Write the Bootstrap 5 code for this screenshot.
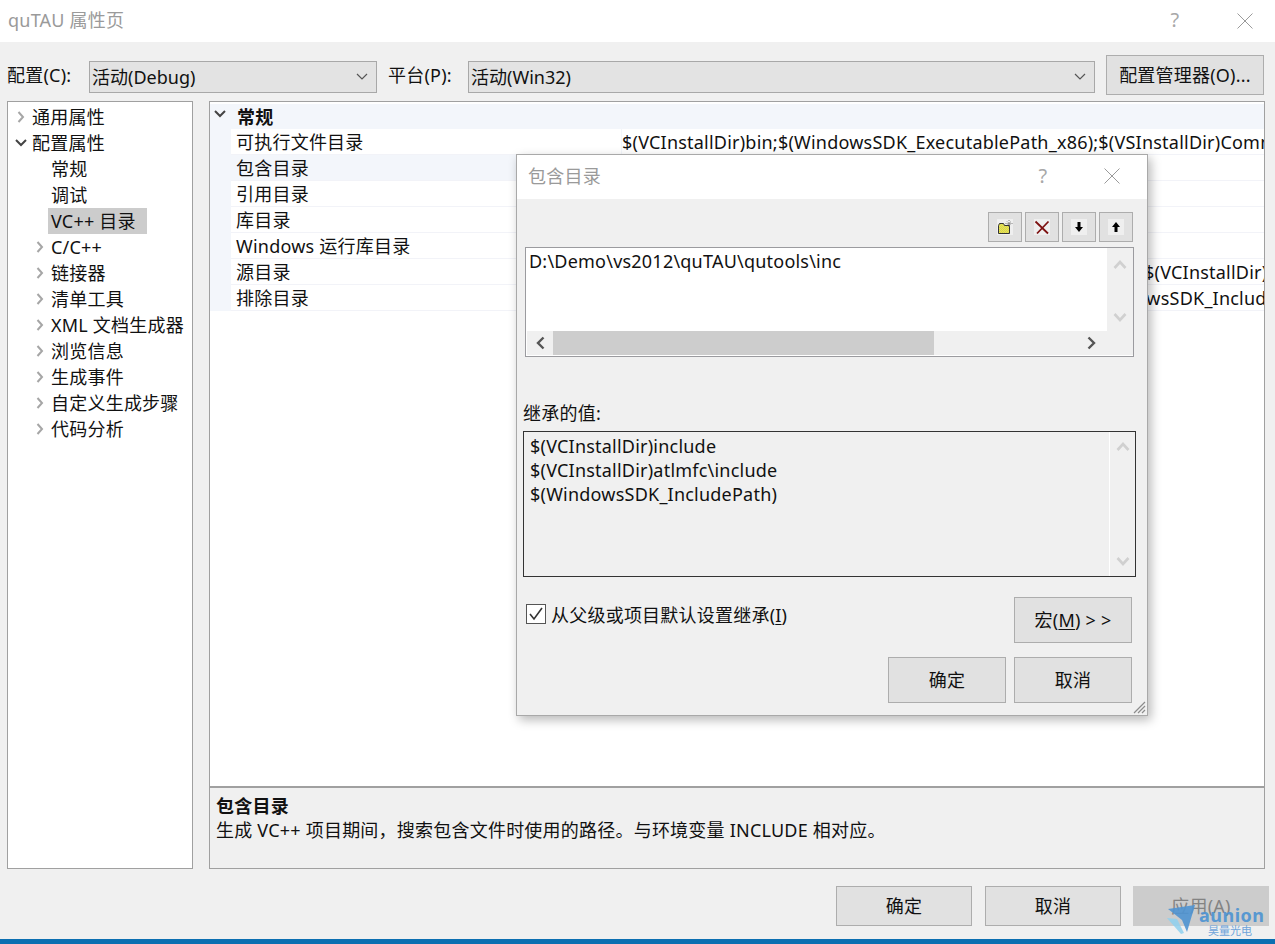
<!DOCTYPE html>
<html lang="zh-CN">
<head>
<meta charset="utf-8">
<title>quTAU 属性页</title>
<link href="https://cdn.jsdelivr.net/npm/bootstrap@5.3.0/dist/css/bootstrap.min.css" rel="stylesheet">
<style>
html,body{height:100%;}
body{background:#f0f0f0;font-family:"Noto Sans","Noto Sans CJK SC",sans-serif;font-size:18px;line-height:26px;letter-spacing:.22px;color:#111;overflow:hidden;}
.desk{position:relative;width:1275px;height:944px;overflow:hidden;}
.tbar{height:42px;background:#fff;color:#9a9a9a;padding:0 0 3px 8px;flex:none;}
.tbar-dlg{height:44px;padding:0 0 2px 11px;background:#fff;color:#9a9a9a;}
.capbtn{width:16px;height:16px;color:#9a9a9a;}
.qmark{font-size:20px;color:#a8a8a8;width:20px;text-align:center;}
.qmark-main{margin-right:37px;}
.qmark-dlg{margin-right:51px;}
.capbtn-main{margin:3px 22px 0 15px;}
.capbtn-dlg{margin-right:27px;}
.cfgrow{height:59px;padding:13px 11px 0 7px;}
.cfglbl{line-height:26px;margin-top:7px;flex:none;}
.cfglbl-a{width:82px;}
.cfglbl-b{width:80px;}
.w-sel1{width:288px;margin-right:11px;flex:none;}
.w-sel2{width:627px;margin-right:11px;flex:none;}
.form-select.wsel{height:32px;margin-top:6px;padding:0 24px 0 2px;border:1px solid #a8a8a8;border-radius:0;background-color:#e3e3e3;color:#111;font-size:18px;line-height:28px;box-shadow:none;
 background-image:url("data:image/svg+xml,%3Csvg xmlns='http://www.w3.org/2000/svg' width='12' height='8'%3E%3Cpath d='M1 1l5 5 5-5' fill='none' stroke='%23555' stroke-width='1.2'/%3E%3C/svg%3E");background-position:right 8px center;background-size:12px 8px;}
.wbtn{border:1px solid #adadad;border-radius:0;background:#e1e1e1;color:#111;font-size:18px;line-height:26px;letter-spacing:.22px;padding:0;}
.wbtn:hover{background:#e1e1e1;border-color:#adadad;color:#111;}
.wbtn-cfg{width:158px;height:40px;flex:none;}
.wbtn-act{width:136px;height:40px;}
.wbtn-first{margin-right:1px;}
.wbtn-dlg{width:118px;height:46px;flex:none;}
.wbtn-dis,.wbtn-dis:disabled{background:#ccc;border-color:#ccc;color:#838383;opacity:1;}
.panes{padding:0 10px 0 7px;height:768px;}
.treepane{width:186px;height:768px;background:#fff;border:1px solid #a0a0a0;padding-top:2px;margin-right:16px;flex:none;}
.tnode{height:26px;white-space:nowrap;position:relative;}
.tnode svg{flex:none;}
.lv0{padding-left:5px;}
.lv0 .tgl{margin-right:3px;}
.lv1{padding-left:24px;}
.lv1 .tgl{margin-right:3px;}
.lv2{padding-left:43px;}
.tgl{width:16px;display:inline-flex;align-items:center;justify-content:center;}
.tsel{background:#ccc;width:99px;margin-left:40px;padding-left:3px;}
.rightcol{width:1056px;}
.gridpane{height:686px;background:#fff;border:1px solid #a0a0a0;padding-top:2px;overflow:hidden;}
.ghead{height:25px;background:#f3f6fb;font-weight:700;padding-left:27px;position:relative;}
.gtog{position:absolute;left:4px;top:6px;}
.grow{height:26px;padding-left:21px;background:#f3f6fb;}
.gname{width:390px;padding-left:5px;background:#fff;border-bottom:1px solid #f2f3f8;flex:none;white-space:nowrap;}
.gval{flex:1;min-width:0;margin-left:1px;background:#fff;border-bottom:1px solid #f2f3f8;white-space:nowrap;overflow:hidden;}
.grow-sel .gname{background:#f3f6fb;}
.indent-a{text-indent:522px;}
.indent-b{text-indent:453px;}
.descpane{height:82px;border:1px solid #a0a0a0;padding:6px 6px;line-height:24px;}
.footrow{height:70px;padding:17px 6px 0 0;gap:12px;}
.bluebar{height:5px;background:#0b6fb1;position:relative;}
.dlgwin{position:absolute;left:516px;top:154px;width:632px;height:562px;background:#f0f0f0;border:1px solid #a9a9a9;box-shadow:3px 4px 10px rgba(0,0,0,.28);}
.tools{padding:13px 14px 0 0;gap:3px;height:48px;}
.toolbtn{width:34px;height:30px;border:1px solid #adadad;background:#e1e1e1;display:flex;align-items:center;justify-content:center;}
.listedit{margin-left:8px;width:609px;height:110px;border:1px solid #9b9b9f;background:#fff;position:relative;}
.listtxt{padding:0 0 0 3px;height:83px;background:#fff;margin-right:26px;}
.vscr{position:absolute;right:0;top:0;width:26px;background:#f0f0f0;display:flex;flex-direction:column;justify-content:space-between;align-items:center;}
.vscr1{height:83px;padding:12px 0 9px;}
.hscr{height:25px;background:#f0f0f0;position:relative;display:flex;align-items:center;justify-content:space-between;padding:0 37px 1px 9px;border-bottom:1px solid #fff;border-left:1px solid #fff;}
.hthumb{position:absolute;left:26px;top:0;width:381px;height:24px;background:#cdcdcd;}
.inhlbl{margin:43px 0 0 6px;height:26px;line-height:26px;}
.inhbox{margin:5px 0 0 6px;width:613px;height:146px;border:1px solid #333;line-height:24px;padding:2px 0 0 6px;position:relative;}
.vscr2{height:144px;border-left:1px solid #fff;padding:10px 0 10px;}
.chkrow{margin:20px 0 0 9px;height:46px;width:606px;}
.form-check-input.wchk{width:20px;height:20px;margin:7px 5px 0 0;border:1px solid #555;border-radius:0;background-color:#fff;flex:none;box-shadow:none;
 background-image:url("data:image/svg+xml,%3Csvg xmlns='http://www.w3.org/2000/svg' viewBox='0 0 20 20'%3E%3Cpath d='M4 10l4 5 8-11' fill='none' stroke='%23333' stroke-width='1.6'/%3E%3C/svg%3E");background-size:20px 20px;}
.chklbl{margin-top:5px;}
.dlgfoot{padding:14px 15px 0 0;gap:8px;}
.grip{position:absolute;right:1px;bottom:1px;}
.wmark{position:absolute;left:1167px;top:904px;width:100px;height:32px;}
.wm-en{position:absolute;left:32px;top:-1px;font-size:18px;line-height:24px;font-weight:700;color:#4f94d2;letter-spacing:.5px;opacity:.92;}
.wm-cn{position:absolute;left:41px;top:20px;font-size:11px;line-height:13px;color:#6ea4da;letter-spacing:0;}
u{text-underline-offset:2px;}
</style>
</head>
<body>
<svg width="0" height="0" class="position-absolute">
 <defs><pattern id="hatch" width="2" height="2" patternUnits="userSpaceOnUse"><rect width="2" height="2" fill="#f6f03a"/><rect width="1" height="1" fill="#c9c86a"/><rect x="1" y="1" width="1" height="1" fill="#c9c86a"/></pattern></defs>
 <symbol id="x" viewBox="0 0 16 16"><path d="M.5.5l15 15M15.500.5l-15 15" fill="none" stroke="currentColor"/></symbol>
 <symbol id="cr" viewBox="0 0 8 12"><path d="M1.500 1l4.500 5-4.500 5" fill="none" stroke="#a6a6a6" stroke-width="2"/></symbol>
 <symbol id="cd" viewBox="0 0 12 8"><path d="M1 1l5 5 5-5" fill="none" stroke="#444" stroke-width="2"/></symbol>
 <symbol id="su" viewBox="0 0 14 9"><path d="M1.500 8l5.500-6 5.500 6" fill="none" stroke="#d0d0d0" stroke-width="2.600"/></symbol>
 <symbol id="sd" viewBox="0 0 14 9"><path d="M1.500 1l5.500 6 5.500-6" fill="none" stroke="#d0d0d0" stroke-width="2.600"/></symbol>
 <symbol id="sl" viewBox="0 0 9 14"><path d="M7.500 1.500l-5.500 5.500 5.500 5.500" fill="none" stroke="#555" stroke-width="2.400"/></symbol>
 <symbol id="sr" viewBox="0 0 9 14"><path d="M1.500 1.500l5.500 5.500-5.500 5.500" fill="none" stroke="#555" stroke-width="2.400"/></symbol>
</svg>
<div class="desk d-flex flex-column">
  <div class="tbar d-flex align-items-center">
    <span class="flex-grow-1">quTAU 属性页</span>
    <span class="qmark qmark-main">?</span>
    <svg class="capbtn capbtn-main"><use href="#x"/></svg>
  </div>
  <div class="cfgrow d-flex align-items-start">
    <span class="cfglbl cfglbl-a">配置(C):</span>
    <select class="form-select wsel w-sel1"><option>活动(Debug)</option></select>
    <span class="cfglbl cfglbl-b">平台(P):</span>
    <select class="form-select wsel w-sel2"><option>活动(Win32)</option></select>
    <button class="btn wbtn wbtn-cfg" type="button">配置管理器(O)...</button>
  </div>
  <div class="panes d-flex">
    <div class="treepane">
      <div class="tnode lv0 d-flex align-items-center"><span class="tgl"><svg width="8" height="12"><use href="#cr"/></svg></span>通用属性</div>
      <div class="tnode lv0 d-flex align-items-center"><span class="tgl"><svg width="12" height="8"><use href="#cd"/></svg></span>配置属性</div>
      <div class="tnode lv2">常规</div>
      <div class="tnode lv2">调试</div>
      <div class="tnode tsel">VC++ 目录</div>
      <div class="tnode lv1 d-flex align-items-center"><span class="tgl"><svg width="8" height="12"><use href="#cr"/></svg></span>C/C++</div>
      <div class="tnode lv1 d-flex align-items-center"><span class="tgl"><svg width="8" height="12"><use href="#cr"/></svg></span>链接器</div>
      <div class="tnode lv1 d-flex align-items-center"><span class="tgl"><svg width="8" height="12"><use href="#cr"/></svg></span>清单工具</div>
      <div class="tnode lv1 d-flex align-items-center"><span class="tgl"><svg width="8" height="12"><use href="#cr"/></svg></span>XML 文档生成器</div>
      <div class="tnode lv1 d-flex align-items-center"><span class="tgl"><svg width="8" height="12"><use href="#cr"/></svg></span>浏览信息</div>
      <div class="tnode lv1 d-flex align-items-center"><span class="tgl"><svg width="8" height="12"><use href="#cr"/></svg></span>生成事件</div>
      <div class="tnode lv1 d-flex align-items-center"><span class="tgl"><svg width="8" height="12"><use href="#cr"/></svg></span>自定义生成步骤</div>
      <div class="tnode lv1 d-flex align-items-center"><span class="tgl"><svg width="8" height="12"><use href="#cr"/></svg></span>代码分析</div>
    </div>
    <div class="rightcol d-flex flex-column">
      <div class="gridpane">
        <div class="ghead"><svg class="gtog" width="12" height="8"><use href="#cd"/></svg>常规</div>
        <div class="grow d-flex"><div class="gname">可执行文件目录</div><div class="gval">$(VCInstallDir)bin;$(WindowsSDK_ExecutablePath_x86);$(VSInstallDir)Common7\Tools\bin;</div></div>
        <div class="grow grow-sel d-flex"><div class="gname">包含目录</div><div class="gval"></div></div>
        <div class="grow d-flex"><div class="gname">引用目录</div><div class="gval"></div></div>
        <div class="grow d-flex"><div class="gname">库目录</div><div class="gval"></div></div>
        <div class="grow d-flex"><div class="gname">Windows 运行库目录</div><div class="gval"></div></div>
        <div class="grow d-flex"><div class="gname">源目录</div><div class="gval indent-a">$(VCInstallDir)atlmfc\src</div></div>
        <div class="grow d-flex"><div class="gname">排除目录</div><div class="gval indent-b">$(WindowsSDK_IncludePath)</div></div>
      </div>
      <div class="descpane">
        <div class="fw-bold">包含目录</div>
        <div>生成 VC++ 项目期间，搜索包含文件时使用的路径。与环境变量 INCLUDE 相对应。</div>
      </div>
    </div>
  </div>
  <div class="footrow d-flex justify-content-end">
    <button class="btn wbtn wbtn-act wbtn-first" type="button">确定</button>
    <button class="btn wbtn wbtn-act" type="button">取消</button>
    <button class="btn wbtn wbtn-act wbtn-dis" type="button" disabled>应用(A)</button>
  </div>
  <div class="bluebar"></div>

  <div class="dlgwin">
    <div class="tbar-dlg d-flex align-items-center">
      <span class="flex-grow-1">包含目录</span>
      <span class="qmark qmark-dlg">?</span>
      <svg class="capbtn capbtn-dlg"><use href="#x"/></svg>
    </div>
    <div class="tools d-flex justify-content-end">
      <div class="toolbtn"><svg width="16" height="16" viewBox="0 0 16 16"><rect width="16" height="16" fill="#efefef"/><path d="M1.500 6.500l1-2h4l1 2h5v8h-11z" fill="url(#hatch)" stroke="#333"/><path d="M12 1v7M8.500 4.500h7M10 2.500l4 4M14 2.500l-4 4" stroke="#666" stroke-width=".8" stroke-dasharray="1 1"/></svg></div>
      <div class="toolbtn"><svg width="16" height="16" viewBox="0 0 16 16"><rect width="16" height="16" fill="#efefef"/><path d="M1.500 2.500L14 14.500M14.500 2.500L3 14.500" stroke="#7d1212" stroke-width="1.800"/></svg></div>
      <div class="toolbtn"><svg width="16" height="16" viewBox="0 0 16 16"><rect width="16" height="16" fill="#efefef"/><path d="M6.500 3h3v5H12l-4 5-4-5h2.500z" fill="#000"/></svg></div>
      <div class="toolbtn"><svg width="16" height="16" viewBox="0 0 16 16"><rect width="16" height="16" fill="#efefef"/><path d="M8 3l4 5H9.500v5h-3V8H4z" fill="#000"/></svg></div>
    </div>
    <div class="listedit">
      <div class="listtxt">D:\Demo\vs2012\quTAU\qutools\inc</div>
      <div class="vscr vscr1"><svg width="14" height="9"><use href="#su"/></svg><svg width="14" height="9"><use href="#sd"/></svg></div>
      <div class="hscr"><div class="hthumb"></div><svg width="9" height="14"><use href="#sl"/></svg><svg width="9" height="14"><use href="#sr"/></svg></div>
    </div>
    <div class="inhlbl">继承的值:</div>
    <div class="inhbox">
      <div>$(VCInstallDir)include</div>
      <div>$(VCInstallDir)atlmfc\include</div>
      <div>$(WindowsSDK_IncludePath)</div>
      <div class="vscr vscr2"><svg width="14" height="9"><use href="#su"/></svg><svg width="14" height="9"><use href="#sd"/></svg></div>
    </div>
    <div class="chkrow d-flex align-items-start">
      <input class="form-check-input wchk" type="checkbox" checked aria-label="inherit">
      <span class="chklbl flex-grow-1">从父级或项目默认设置继承(<u>I</u>)</span>
      <button class="btn wbtn wbtn-dlg" type="button">宏(<u>M</u>) &gt; &gt;</button>
    </div>
    <div class="dlgfoot d-flex justify-content-end">
      <button class="btn wbtn wbtn-dlg" type="button">确定</button>
      <button class="btn wbtn wbtn-dlg" type="button">取消</button>
    </div>
    <svg class="grip" width="14" height="14" viewBox="0 0 14 14"><path d="M13 2L2 13M13 6l-7 7M13 10l-3 3" stroke="#8c8c8c" stroke-width="1.200"/></svg>
  </div>

  <div class="wmark">
    <svg width="30" height="30" viewBox="0 0 30 30" class="position-absolute top-0 start-0"><path d="M1 5L28 1 20 28 15 16z" fill="#4f94d2" opacity=".9"/><path d="M0 14l10 1 7 14-3 1z" fill="#8ed0ee" opacity=".85"/></svg>
    <span class="wm-en">aunion</span>
    <span class="wm-cn">昊量光电</span>
  </div>
</div>
</body>
</html>
